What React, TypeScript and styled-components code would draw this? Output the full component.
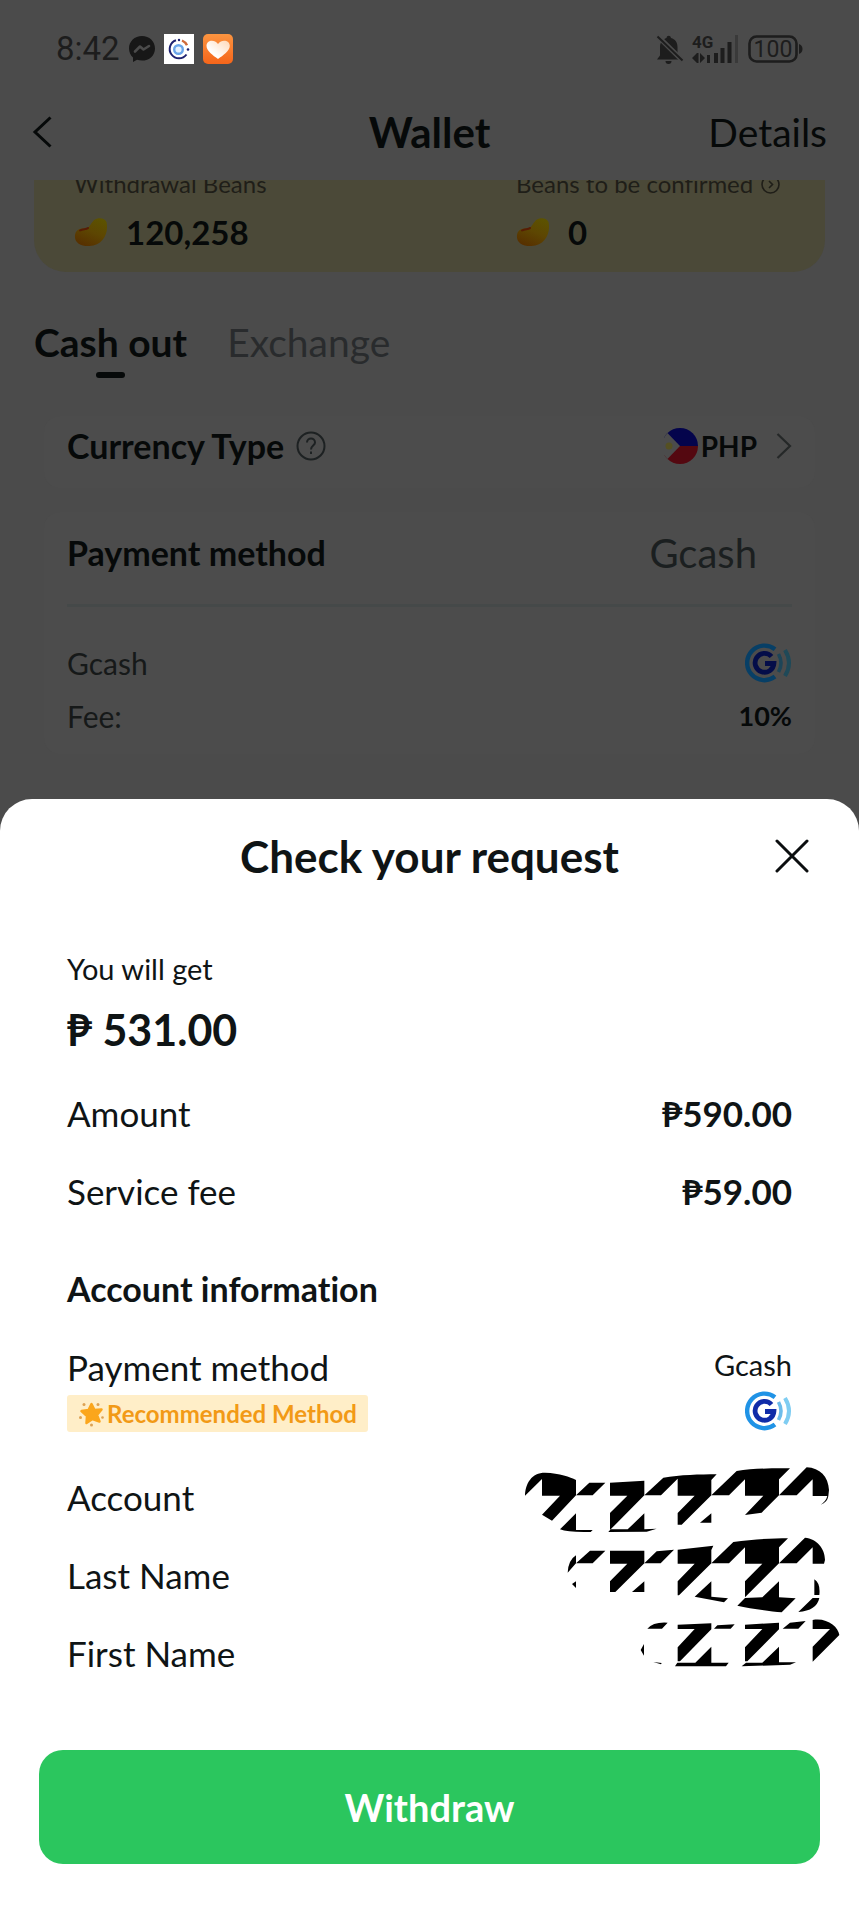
import React from "react";
import styled, { createGlobalStyle } from "styled-components";

const GlobalStyle = createGlobalStyle`
  * { box-sizing: border-box; }
  body { margin: 0; background: #4b4b4b; }
  button { border: 0; padding: 0; background: none; font: inherit; color: inherit; cursor: pointer; }
  h1, h2, h3, p { margin: 0; font: inherit; }
  svg { display: block; flex: none; }
`;

const Page = styled.div`
  min-height: 100vh;
  display: flex;
  flex-direction: column;
  font-family: Lato, "Noto Sans", sans-serif;
  font-variant-ligatures: none;
  color: #0f1415;
`;

const Backdrop = styled.div`
  background: #4b4b4b;
  color: #060909;
`;

const StatusBar = styled.div`
  display: flex;
  justify-content: space-between;
  align-items: center;
  height: 98px;
  padding: 0 55px 0 56px;
  color: #1d1d1d;
`;

const StatusGroup = styled.div<{ $gap: number }>`
  display: flex;
  align-items: center;
  gap: ${(p) => p.$gap}px;
`;

const Clock = styled.span`
  font: 400 33px/40px Roboto, sans-serif;
`;

const NavBar = styled.header`
  display: grid;
  grid-template-columns: 1fr auto 1fr;
  align-items: center;
  height: 82px;
  padding: 0 32px 14px;
`;

const NavTitle = styled.h1`
  font-weight: 700;
  font-size: 42px;
  line-height: 52px;
`;

const NavLink = styled.a`
  justify-self: end;
  font-size: 39px;
  line-height: 48px;
  color: inherit;
  text-decoration: none;
`;

const Content = styled.main`
  overflow: hidden;
  padding: 0 34px 45px;
`;

const BeansCard = styled.section`
  display: grid;
  grid-template-columns: 442px 1fr;
  margin-top: -40px;
  padding: 28px 40px 20px;
  border-radius: 32px;
  background: #4b4938;
`;

const BeansLabel = styled.div`
  display: flex;
  align-items: center;
  gap: 8px;
  height: 32px;
  font-size: 24px;
  line-height: 32px;
  white-space: nowrap;
  color: #1f1e18;
`;

const BeansValue = styled.div`
  display: flex;
  align-items: center;
  gap: 18px;
  margin-top: 12px;
  font-weight: 700;
  font-size: 33px;
  line-height: 40px;
`;

const Tabs = styled.div`
  display: flex;
  gap: 40px;
  margin-top: 46px;
`;

const Tab = styled.button<{ $active?: boolean }>`
  display: flex;
  flex-direction: column;
  align-items: center;
  gap: 6px;
  font-size: 39px;
  line-height: 48px;
  font-weight: ${(p) => (p.$active ? 700 : 400)};
  color: ${(p) => (p.$active ? "#060909" : "#292b2d")};

  &::after {
    content: "";
    width: 29px;
    height: 6px;
    border-radius: 3px;
    background: ${(p) => (p.$active ? "#060909" : "transparent")};
  }
`;

const Card = styled.section`
  margin: 0 10px;
  padding: 0 23px;
  border-radius: 16px;
  background: #4c4c4c;
`;

const CurrencyCard = styled(Card)`
  display: flex;
  justify-content: space-between;
  align-items: center;
  height: 72px;
  margin-top: 38px;
  padding-bottom: 12px;
`;

const CardTitle = styled.h2`
  display: flex;
  align-items: center;
  gap: 12px;
  font-weight: 700;
  font-size: 34px;
  line-height: 40px;
`;

const CurrencyButton = styled.button`
  display: flex;
  align-items: center;
  gap: 3px;
  font-weight: 700;
  font-size: 28px;
  line-height: 36px;

  svg:last-child { margin-left: 14px; }
`;

const MethodCard = styled(Card)`
  margin-top: 24px;
  padding-bottom: 11px;
`;

const MethodHead = styled.div`
  display: flex;
  justify-content: space-between;
  align-items: center;
  height: 95px;
  padding: 0 35px 10px 0;
  border-bottom: 3px solid #454949;
`;

const MethodValue = styled.span`
  font-size: 40px;
  line-height: 48px;
  color: #1b1f20;
`;

const MethodRow = styled.div`
  display: flex;
  justify-content: space-between;
  align-items: center;
  height: 53px;
  padding-bottom: 2px;
  font-size: 30px;
  line-height: 36px;
  color: #161919;

  ${MethodHead} + & { margin-top: 30px; }
`;

const Strong = styled.strong`
  font-weight: 700;
  font-size: 27px;
  color: #060909;
`;

const Sheet = styled.section`
  flex: 1;
  display: flex;
  flex-direction: column;
  padding-bottom: 56px;
  border-radius: 32px 32px 0 0;
  background: #fff;
`;

const SheetHead = styled.header`
  display: grid;
  grid-template-columns: 1fr auto 1fr;
  align-items: center;
  height: 114px;
  padding: 0 50px;
`;

const SheetTitle = styled.h2`
  grid-column: 2;
  font-weight: 700;
  font-size: 44px;
  line-height: 52px;
`;

const CloseButton = styled.button`
  justify-self: end;
`;

const SheetBody = styled.div`
  position: relative;
  flex: 1;
  padding: 38px 67px 56px;
`;

const Caption = styled.p`
  font-size: 29px;
  line-height: 36px;
`;

const Total = styled.p`
  margin: 16px 0 17px;
  font-weight: 700;
  font-size: 43px;
  line-height: 54px;
`;

const Row = styled.div`
  display: flex;
  justify-content: space-between;
  align-items: center;
  height: 78px;
  font-size: 35px;
  line-height: 40px;

  strong { font-weight: 700; }
`;

const SectionTitle = styled.h3`
  margin-top: 39px;
  font-weight: 700;
  font-size: 34px;
  line-height: 40px;
`;

const MethodLine = styled(Row)`
  align-items: flex-start;
  height: auto;
  margin: 38px 0 26px;
`;

const MethodColumn = styled.div<{ $end?: boolean }>`
  display: flex;
  flex-direction: column;
  align-items: ${(p) => (p.$end ? "flex-end" : "flex-start")};
  gap: 8px;
`;

const Badge = styled.span`
  display: flex;
  align-items: center;
  gap: 3px;
  height: 37px;
  padding: 0 11px;
  border-radius: 3px;
  background: #ffeec8;
  color: #f29a16;
  font-weight: 700;
  font-size: 24px;
  line-height: 36px;
`;

const Redaction = styled.svg`
  position: absolute;
  right: 0;
  bottom: 60px;
`;

const WithdrawButton = styled.button`
  height: 114px;
  margin: 0 39px;
  border-radius: 24px;
  background: #2bc65e;
  color: #fff;
  font-weight: 700;
  font-size: 38px;
  line-height: 48px;
`;

const MessengerIcon = () => (
  <svg width="26" height="26" viewBox="0 0 26 26">
    <path d="M13 0C5.600 0 0 5.400 0 12.400c0 3.600 1.500 6.800 4 9V26l4-2.200c1.600.5 3.200.8 5 .8 7.400 0 13-5.300 13-12.200S20.400 0 13 0z" fill="#171717" />
    <path d="M6 15.500l5-5 3.500 3 5.500-3.500" fill="none" stroke="#4b4b4b" strokeWidth="2.600" strokeLinejoin="round" strokeLinecap="round" />
  </svg>
);

const OrbitIcon = () => (
  <svg width="30" height="30" viewBox="0 0 30 30">
    <rect width="30" height="30" fill="#fff" />
    <path d="M12 6.200A9.300 9.300 0 1 0 22.500 20.500" fill="none" stroke="#1d2170" strokeWidth="2" />
    <path d="M18 6.500a9.300 9.300 0 0 1 5 4.800" fill="none" stroke="#cf6a3a" strokeWidth="2.400" />
    <circle cx="15" cy="6" r="1.200" fill="#1d2170" />
    <circle cx="24" cy="15.500" r="1.300" fill="#1d2170" />
    <circle cx="14.500" cy="15.500" r="4.300" fill="#e4f1ff" stroke="#6aa5ea" strokeWidth="2.400" />
  </svg>
);

const HeartIcon = () => (
  <svg width="30" height="30" viewBox="0 0 30 30">
    <defs>
      <linearGradient id="heartBg" x1="0" y1="0" x2="0" y2="1">
        <stop offset="0" stopColor="#fb9440" />
        <stop offset="1" stopColor="#f5651a" />
      </linearGradient>
      <linearGradient id="heartFill" x1="1" y1="0" x2="0.300" y2="0.700">
        <stop offset="0" stopColor="#ffd9b8" />
        <stop offset="1" stopColor="#fff" />
      </linearGradient>
    </defs>
    <rect width="30" height="30" rx="5" fill="url(#heartBg)" />
    <path d="M15 25C10 21.500 3.500 17 3.500 11.800 3.500 6.500 11 4.500 15 10c4-5.500 11.800-3.500 11.800 1.800C26.800 17 20 21.500 15 25z" fill="url(#heartFill)" />
  </svg>
);

const MutedBellIcon = () => (
  <svg width="28" height="30" viewBox="0 0 28 30" fill="#1d1d1d">
    <path d="M1 25.500l3-4V13c0-5 3-8 6.500-9 .3-3 4-3 4.500 0 4 1 6.500 4 6.500 9v8.500l2 4z" />
    <path d="M9.500 27h6a3 3 0 0 1-6 0z" />
    <path d="M1 1.500l26 25.500" stroke="#4b4b4b" strokeWidth="5" />
    <path d="M1.500 2.500l25 24" stroke="#1d1d1d" strokeWidth="2" />
  </svg>
);

const SignalIcon = () => (
  <svg width="48" height="38" viewBox="0 -4 48 38" fill="#1d1d1d">
    <text x="0" y="14" fontFamily="Roboto, sans-serif" fontWeight="700" fontSize="17">4G</text>
    <path d="M5 19v10l-5-5zM8 19v10l5-5z" />
    <path d="M5 19h1.500v10H5zM15 21h3v8h-3zM22 19h4v10h-4zM28.500 14h4v15h-4zM35.500 8h4v21h-4z" />
    <path d="M43 1h3v28h-3z" fill="#3a3a3a" />
  </svg>
);

const BatteryIcon = () => (
  <svg width="56" height="28" viewBox="0 0 56 28" fill="#1d1d1d">
    <rect x="1.500" y="1.500" width="47" height="25" rx="7" fill="none" stroke="#1d1d1d" strokeWidth="2.600" />
    <path d="M51 9c2 .5 3.500 2.500 3.500 5S53 18.500 51 19z" />
    <text x="25" y="22" textAnchor="middle" fontFamily="Roboto, sans-serif" fontSize="23">100</text>
  </svg>
);

const BackIcon = () => (
  <svg width="20" height="32" viewBox="0 0 20 32" fill="none" stroke="#060909" strokeWidth="3">
    <path d="M18.500 1.500L3 16l15.500 14.500" />
  </svg>
);

const BeanIcon = () => (
  <svg width="34" height="32" viewBox="0 0 34 32">
    <defs>
      <linearGradient id="bean" x1="0.800" y1="0" x2="0.300" y2="1">
        <stop offset="0" stopColor="#5c5300" />
        <stop offset="0.500" stopColor="#5d4602" />
        <stop offset="1" stopColor="#573000" />
      </linearGradient>
    </defs>
    <path d="M21 3.500C25 1 31 2 32.500 6c2.500 12-4 23.500-17 24C7 30.500 0 27 1 19c1-6.500 6.500-6.500 11-6.500 4-.5 5-6.500 9-9z" fill="url(#bean)" />
    <path d="M6 14.500c3-2 6-.5 8-2.500" fill="none" stroke="#571c05" strokeWidth="2" strokeLinecap="round" />
  </svg>
);

const MoreIcon = () => (
  <svg width="19" height="19" viewBox="0 0 19 19" fill="none" stroke="#1f1e18" strokeWidth="1.600">
    <circle cx="9.500" cy="9.500" r="8.500" />
    <path d="M8 6l3.500 3.500L8 13" />
  </svg>
);

const HelpIcon = () => (
  <svg width="30" height="30" viewBox="0 0 30 30" fill="none" stroke="#1d2122" strokeWidth="2">
    <circle cx="15" cy="15" r="13.500" />
    <path d="M11 11.500c0-5.500 8-5.500 8 0 0 3.200-4 3-4 7M15 20.500v2.500" />
  </svg>
);

const FlagIcon = () => (
  <svg width="34" height="36" viewBox="2 0 34 36">
    <defs>
      <clipPath id="flagClip"><circle cx="18" cy="18" r="18" /></clipPath>
    </defs>
    <g clipPath="url(#flagClip)">
      <path d="M0 0h36v18H0z" fill="#04044c" />
      <path d="M0 18h36v18H0z" fill="#540810" />
      <path d="M0 0L4 3.500 18 18 4 32.500 0 36z" fill="#4c4c4c" />
      <circle cx="7" cy="18" r="3.500" fill="#555022" />
    </g>
  </svg>
);

const ForwardIcon = () => (
  <svg width="18" height="28" viewBox="0 0 18 28" fill="none" stroke="#252828" strokeWidth="2.200">
    <path d="M3.500 2L16 14 3.500 26" />
  </svg>
);

const GcashLogo = ({ dim }: { dim?: boolean }) => {
  const [ring, mark, wave1, wave2] = dim
    ? ["#073f66", "#040d49", "#1d4558", "#1f4958"]
    : ["#2093e6", "#102ca8", "#6cbcea", "#7fcdf2"];
  return (
    <svg width="47" height="40" viewBox="0 0 47 40" fill="none">
      <path d="M30 6.200A17.300 17.300 0 1 0 30 33.600" stroke={ring} strokeWidth="4.400" />
      <path d="M26.500 13.500A9.400 9.400 0 1 0 28.900 20.500H20" stroke={mark} strokeWidth="4.800" />
      <path d="M33.500 11q5 9 0 18" stroke={wave1} strokeWidth="3.600" />
      <path d="M40 7q8 13 0 26" stroke={wave2} strokeWidth="4" />
    </svg>
  );
};

const CloseIcon = () => (
  <svg width="34" height="34" viewBox="0 0 34 34" fill="none" stroke="#0b0e0f" strokeWidth="3" strokeLinecap="round">
    <path d="M2 2l30 30M32 2L2 32" />
  </svg>
);

const StarIcon = () => (
  <svg width="26" height="26" viewBox="0 0 26 26">
    <path d="M13.500 3l3 6 7-.5-4.500 5.500 2.500 6.500-7-2.500-6 4 .5-7L3.500 10l7-1z" fill="#fba61c" stroke="#fba61c" strokeWidth="2.500" strokeLinejoin="round" />
    <g fill="#dda152">
      <circle cx="6" cy="3.500" r="1.500" />
      <circle cx="20" cy="3.500" r="1.500" />
      <circle cx="2.500" cy="16.500" r="1.500" />
      <circle cx="24.500" cy="16.500" r="1.300" />
      <circle cx="13.500" cy="24" r="1.500" />
    </g>
  </svg>
);

const RedactionMarks = () => (
  <Redaction width="359" height="250" viewBox="0 0 1077 750" fill="#000" aria-hidden="true">
    <path d="M75 167C76 130 95 98 135 98C180 100 210 110 228 120V166L156 242L126 224L180 167H126V117ZM228 166L268 128H316L278 166ZM228 220L180 268Q205 278 272 276L278 270H228Z" />
    <path d="M330 128L433 122V166L332 268L325 276L440 275L470 266L433 268V220L383 268H330V219L382 167H330Z" />
    <path d="M433 166L490 113C540 105 600 103 650 103L634 120V166L545 254H533V219L584 167H533V116L483 166ZM634 220V248H600Z" />
    <path d="M634 166L710 93C760 85 830 84 870 85L837 118V166L785 218L735 225L790 167H735V118L687 166Z" />
    <path d="M837 166L920 82C960 84 985 110 987 150L985 168H938V118L890 166ZM985 168Q982 188 962 194Q978 184 982 168Z" />
    <path d="M203 398Q205 360 228 346V370ZM228 370L270 332H316L278 370ZM228 424V444L216 432Z" />
    <path d="M330 332H433V370L346 456H330V424L382 371H330ZM433 424V456H396ZM433 370L470 334L522 329L482 370Z" />
    <path d="M533 329L640 317L634 330V370L537 466H533V424L584 371H533ZM634 424V470L684 475L672 487L584 470Z" />
    <path d="M634 370L700 306C760 297 820 295 864 295L837 322V370L735 472V424L787 371H735V322L687 370Z" />
    <path d="M837 370L915 293C950 296 975 325 975 360L972 371H938V322L890 370ZM837 424V472L887 475L845 517C810 515 750 505 712 497L735 474L787 472ZM943 418Q962 430 958 465H943ZM895 516L938 474H958Q950 512 895 516Z" />
    <path d="M442 566Q460 545 503 548L486 566ZM432 612V647L422 630ZM460 666L485 669L483 673Z" />
    <path d="M533 554L634 550V568L540 664H533V622L584 567H533ZM634 620V668H686L678 679H525L532 668H586ZM642 566L652 556L704 553L692 566Z" />
    <path d="M735 554L837 548V568L742 664H735V622L787 567H735ZM837 620V667H888L870 674L725 679L738 668H787ZM848 566L870 548L917 543L895 566Z" />
    <path d="M938 540C980 532 1015 560 1018 585L938 665V620L990 567H938Z" />
  </Redaction>
);

export default function App() {
  return (
    <Page>
      <GlobalStyle />
      <Backdrop>
        <StatusBar>
          <StatusGroup $gap={9}>
            <Clock>8:42</Clock>
            <MessengerIcon />
            <OrbitIcon />
            <HeartIcon />
          </StatusGroup>
          <StatusGroup $gap={8}>
            <MutedBellIcon />
            <SignalIcon />
            <BatteryIcon />
          </StatusGroup>
        </StatusBar>
        <NavBar>
          <button aria-label="Back"><BackIcon /></button>
          <NavTitle>Wallet</NavTitle>
          <NavLink href="#details">Details</NavLink>
        </NavBar>
        <Content>
          <BeansCard>
            <div>
              <BeansLabel>Withdrawal Beans</BeansLabel>
              <BeansValue><BeanIcon />120,258</BeansValue>
            </div>
            <div>
              <BeansLabel>Beans to be confirmed <MoreIcon /></BeansLabel>
              <BeansValue><BeanIcon />0</BeansValue>
            </div>
          </BeansCard>
          <Tabs>
            <Tab $active>Cash out</Tab>
            <Tab>Exchange</Tab>
          </Tabs>
          <CurrencyCard>
            <CardTitle>Currency Type <HelpIcon /></CardTitle>
            <CurrencyButton><FlagIcon />PHP<ForwardIcon /></CurrencyButton>
          </CurrencyCard>
          <MethodCard>
            <MethodHead>
              <CardTitle>Payment method</CardTitle>
              <MethodValue>Gcash</MethodValue>
            </MethodHead>
            <MethodRow>Gcash <GcashLogo dim /></MethodRow>
            <MethodRow>Fee: <Strong>10%</Strong></MethodRow>
          </MethodCard>
        </Content>
      </Backdrop>
      <Sheet>
        <SheetHead>
          <SheetTitle>Check your request</SheetTitle>
          <CloseButton aria-label="Close"><CloseIcon /></CloseButton>
        </SheetHead>
        <SheetBody>
          <Caption>You will get</Caption>
          <Total>₱ 531.00</Total>
          <Row>Amount <strong>₱590.00</strong></Row>
          <Row>Service fee <strong>₱59.00</strong></Row>
          <SectionTitle>Account information</SectionTitle>
          <MethodLine>
            <MethodColumn>
              Payment method
              <Badge><StarIcon />Recommended Method</Badge>
            </MethodColumn>
            <MethodColumn $end>
              <Caption>Gcash</Caption>
              <GcashLogo />
            </MethodColumn>
          </MethodLine>
          <Row>Account</Row>
          <Row>Last Name</Row>
          <Row>First Name</Row>
          <RedactionMarks />
        </SheetBody>
        <WithdrawButton>Withdraw</WithdrawButton>
      </Sheet>
    </Page>
  );
}
